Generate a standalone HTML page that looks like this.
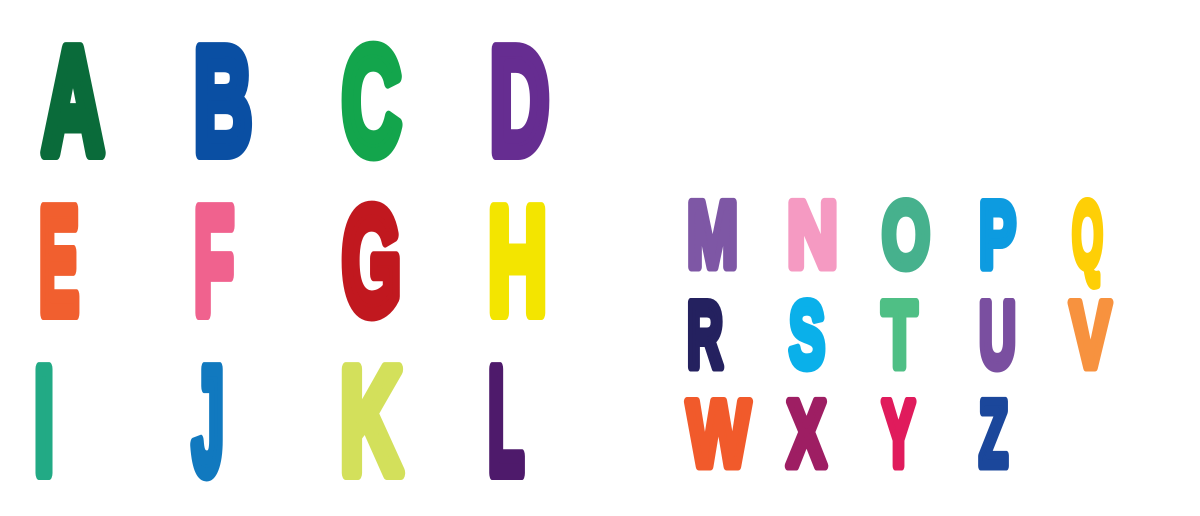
<!DOCTYPE html>
<html><head><meta charset="utf-8"><style>
html,body{margin:0;padding:0;background:#fff;width:1200px;height:516px;overflow:hidden}
svg{display:block}
text{font-family:"Liberation Sans",sans-serif;font-weight:bold;stroke-linejoin:round}
.b text{stroke-width:14}
.s text{stroke-width:9}
</style></head><body>
<svg width="1200" height="516" viewBox="0 0 1200 516">
<g class="b" font-size="151">
<text x="42" y="153" textLength="62" lengthAdjust="spacingAndGlyphs" fill="#0a6b3a" stroke="#0a6b3a">A</text>
<text x="194" y="153" textLength="58" lengthAdjust="spacingAndGlyphs" fill="#0a4fa3" stroke="#0a4fa3">B</text>
<text x="342" y="153" textLength="59" lengthAdjust="spacingAndGlyphs" fill="#13a54c" stroke="#13a54c">C</text>
<text x="490" y="153" textLength="59" lengthAdjust="spacingAndGlyphs" fill="#662d91" stroke="#662d91">D</text>
<text x="39" y="313" textLength="40" lengthAdjust="spacingAndGlyphs" fill="#f15f2f" stroke="#f15f2f">E</text>
<text x="194" y="313" textLength="40" lengthAdjust="spacingAndGlyphs" fill="#f0628e" stroke="#f0628e">F</text>
<text x="342" y="313" textLength="59" lengthAdjust="spacingAndGlyphs" fill="#c1181f" stroke="#c1181f">G</text>
<text x="488" y="313" textLength="59" lengthAdjust="spacingAndGlyphs" fill="#f3e500" stroke="#f3e500">H</text>
<text x="34" y="473" textLength="20" lengthAdjust="spacingAndGlyphs" fill="#22aa85" stroke="#22aa85">I</text>
<text x="192" y="473" textLength="32" lengthAdjust="spacingAndGlyphs" fill="#1179bf" stroke="#1179bf">J</text>
<text x="340" y="473" textLength="62" lengthAdjust="spacingAndGlyphs" fill="#d3e05b" stroke="#d3e05b">K</text>
<text x="488" y="473" textLength="36" lengthAdjust="spacingAndGlyphs" fill="#4e1a6b" stroke="#4e1a6b">L</text>
</g>
<g class="s" font-size="94">
<text x="687" y="267" textLength="51" lengthAdjust="spacingAndGlyphs" fill="#7e57a5" stroke="#7e57a5">M</text>
<text x="787" y="267" textLength="51" lengthAdjust="spacingAndGlyphs" fill="#f59ac2" stroke="#f59ac2">N</text>
<text x="882" y="267" textLength="48" lengthAdjust="spacingAndGlyphs" fill="#46b18d" stroke="#46b18d">O</text>
<text x="979" y="267" textLength="37" lengthAdjust="spacingAndGlyphs" fill="#0d9be0" stroke="#0d9be0">P</text>
<text x="1072" y="267" textLength="31" lengthAdjust="spacingAndGlyphs" fill="#fecf06" stroke="#fecf06">Q</text>
<text x="687" y="367" textLength="36" lengthAdjust="spacingAndGlyphs" fill="#24215f" stroke="#24215f">R</text>
<text x="789" y="367" textLength="36" lengthAdjust="spacingAndGlyphs" fill="#0ab0ea" stroke="#0ab0ea">S</text>
<text x="882" y="367" textLength="35" lengthAdjust="spacingAndGlyphs" fill="#4fbf85" stroke="#4fbf85">T</text>
<text x="979" y="367" textLength="37" lengthAdjust="spacingAndGlyphs" fill="#7a4fa0" stroke="#7a4fa0">U</text>
<text x="1070" y="367" textLength="41" lengthAdjust="spacingAndGlyphs" fill="#f7923f" stroke="#f7923f">V</text>
<text x="687" y="466" textLength="63" lengthAdjust="spacingAndGlyphs" fill="#f15a2b" stroke="#f15a2b">W</text>
<text x="787" y="466" textLength="39" lengthAdjust="spacingAndGlyphs" fill="#9e1e63" stroke="#9e1e63">X</text>
<text x="882" y="466" textLength="33" lengthAdjust="spacingAndGlyphs" fill="#e01b5c" stroke="#e01b5c">Y</text>
<text x="979" y="466" textLength="29" lengthAdjust="spacingAndGlyphs" fill="#1b479b" stroke="#1b479b">Z</text>
</g>
</svg>
</body></html>
